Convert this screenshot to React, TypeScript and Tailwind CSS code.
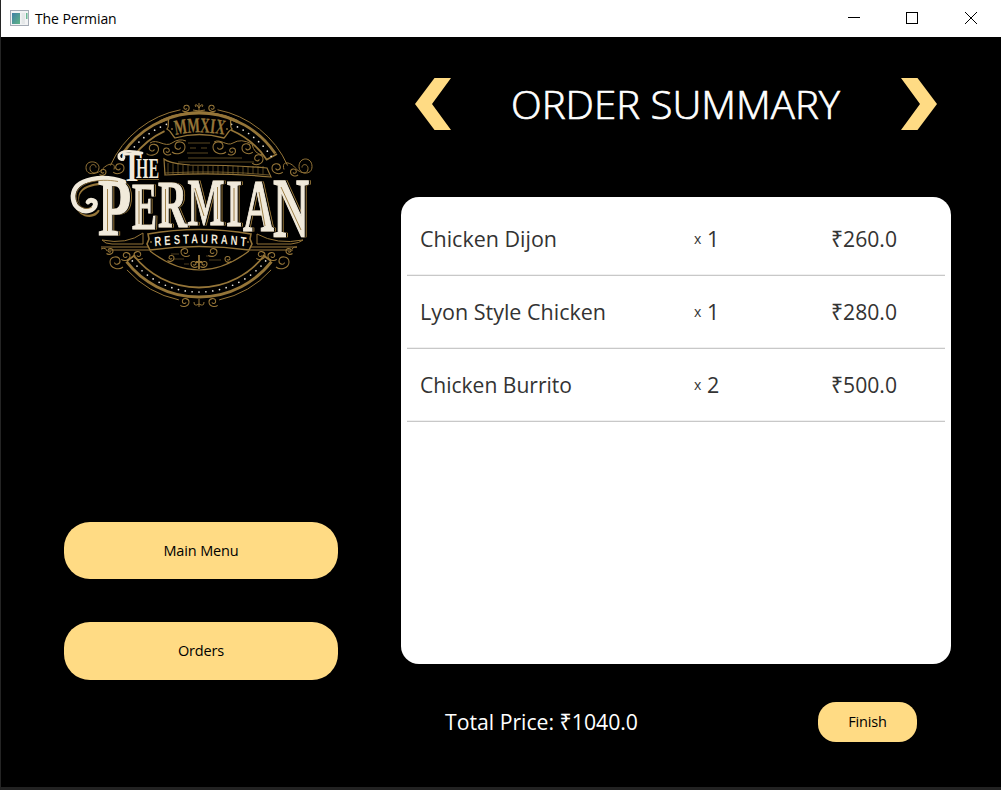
import React from "react";

const GOLD = "#957538";
const CREAM = "#f1eadb";

const items = [
  { name: "Chicken Dijon", width: 137, qty: 1, price: "₹260.0" },
  { name: "Lyon Style Chicken", width: 186, qty: 1, price: "₹280.0" },
  { name: "Chicken Burrito", width: 152, qty: 2, price: "₹500.0" },
];

/* A small open spiral: s is its radius, flip mirrors it. */
function Curl({ x, y, s, flip = false }: { x: number; y: number; s: number; flip?: boolean }) {
  const k = s / 6;
  return (
    <path
      d="M7 5 C3 8.500 -6 6.500 -6 0 C-6 -6 3 -7 4 -1.500 C4.500 2.500 -1 3.500 -1.500 0.500"
      transform={`translate(${x} ${y}) scale(${flip ? -k : k} ${k})`}
      strokeWidth={1.05 / k}
    />
  );
}

function ringPoints(r: number, from: number, to: number, n: number) {
  return Array.from({ length: n }, (_, i) => {
    const a = ((from + ((to - from) * i) / (n - 1)) * Math.PI) / 180;
    return { x: 199 + r * Math.cos(a), y: 205 + r * Math.sin(a) };
  });
}

function arc(r: number, from: number, to: number) {
  const p = ringPoints(r, from, to, 2);
  return `M${p[0].x} ${p[0].y} A${r} ${r} 0 0 1 ${p[1].x} ${p[1].y}`;
}

const letters = [
  { c: "P", x: 98, w: 33, top: 181, base: 235 },
  { c: "E", x: 132, w: 25, top: 185, base: 229 },
  { c: "R", x: 158, w: 29, top: 183, base: 227 },
  { c: "M", x: 187.5, w: 37, top: 181, base: 225 },
  { c: "I", x: 226, w: 16, top: 182, base: 226 },
  { c: "A", x: 243, w: 31, top: 182, base: 231 },
  { c: "N", x: 273, w: 36, top: 181, base: 237 },
];

function Word() {
  return (
    <g
      fill={CREAM}
      stroke={CREAM}
      strokeWidth="1"
      fontFamily="Liberation Serif, serif"
      fontWeight="bold"
      className="[filter:drop-shadow(1.5px_0px_0px_#000)_drop-shadow(1.5px_0.5px_0px_#957538)]"
    >
      {letters.map((l) => (
        <text
          key={l.c}
          fontSize="60"
          textLength={l.w}
          lengthAdjust="spacingAndGlyphs"
          transform={`translate(${l.x} ${l.base}) scale(1 ${(l.base - l.top) / 39.6})`}
        >
          {l.c}
        </text>
      ))}
    </g>
  );
}

function Logo() {
  const dots = [...ringPoints(87, 222, 248, 7), ...ringPoints(87, 292, 326, 9), ...ringPoints(87, 40, 140, 23)];
  return (
    <svg viewBox="60 95 270 220" className="h-[220px] w-[270px]" fill="none" stroke={GOLD} strokeWidth="1">
      <path d={arc(97, 204, 259)} />
      <path d={arc(97, 281, 336)} />
      <path d={arc(97, 42, 78)} />
      <path d={arc(97, 102, 138)} />
      <path d={arc(92, 214, 326)} strokeWidth="2.8" />
      <path d={arc(81.5, 217, 245)} strokeWidth="1.8" />
      <path d={arc(81.5, 293, 326)} strokeWidth="1.8" />
      <path d={arc(92, 38, 142)} strokeWidth="2.8" />
      <path d={arc(82.5, 38, 142)} strokeWidth="1.8" />
      <path d="M266 160 L277 154 M127 261 L135 255 M263 255 L271 261" strokeWidth="1.8" />
      <g fill="#e9e5dc" stroke="none">
        {dots.map((d, i) => (
          <circle key={i} cx={d.x} cy={d.y} r="0.85" />
        ))}
      </g>

      {/* year banner */}
      <path
        d="M169 118 C167 122 170 126 167 129 C171 131 172 135 175 138 Q199 131 224 138 C227 135 228 131 232 129 C229 126 232 122 230 118 Q199 106 169 118"
        strokeWidth="1.3"
        fill="#000"
      />
      <path d={arc(92, 245, 295)} strokeWidth="2.8" />
      <path id="year-line" d="M173 135.5 Q200 129 227 135.5" stroke="none" />
      <text fill={GOLD} stroke={GOLD} strokeWidth="0.3" fontFamily="Liberation Serif, serif" fontWeight="bold" fontSize="21" textLength="49" lengthAdjust="spacingAndGlyphs">
        <textPath href="#year-line" startOffset="2.5">MMXIX</textPath>
      </text>
      <g fill={GOLD} stroke="none">
        <circle cx="172" cy="129" r="0.9" />
        <circle cx="227" cy="129" r="0.9" />
      </g>

      {/* crown and foot ornaments */}
      <path d="M193 110 Q199 112 205 110 M199 103 V111 M196 107 Q194 104 197 105 L199 108 L201 105 Q204 104 202 107" />
      <Curl x={186} y={108} s={3.2} flip />
      <Curl x={212} y={108} s={3.2} />
      <path d="M199 299 V307 M194 302 Q194 307 199 304 Q204 307 204 302" />
      <Curl x={185} y={302} s={4} flip />
      <Curl x={213} y={302} s={4} />

      {/* side scrolls, each one a coil that runs into an S-shaped stem */}
      <path d="M96 168 C96 164 90 164 90 169 C90 175 99 175 99 168 C99 161 86 160 86 168 C86 177 98 175 103 169 C109 163 116 163 114 170" transform="translate(0 -.5)" />
      <Curl x={103} y={172} s={3} flip />
      <Curl x={119} y={168} s={5} flip />
      <path d="M302 168 C302 164 308 164 308 169 C308 176 299 174 299 167 C299 157 312 157 312 167 C312 177 299 174 295 168 C290 162 281 161 284 170" transform="translate(0 -.5)" />
      <Curl x={294} y={172} s={3.5} />
      <Curl x={277} y={168} s={5} />
      <Curl x={153} y={149} s={5.5} flip />
      <Curl x={167} y={151} s={3.5} />
      <Curl x={179} y={147} s={6} flip />
      <path d="M150 143 C157 138 165 148 172 143 Q179 138 186 141" />
      <Curl x={219} y={147} s={6} />
      <Curl x={232} y={151} s={3.5} flip />
      <Curl x={247} y={148} s={5} />
      <path d="M214 142 C220 138 227 147 233 143 Q241 138 252 144 Q254 154 263 155" />
      <Curl x={258} y={159} s={5} flip />
      <Curl x={116} y={262} s={6} />
      <Curl x={110} y={251} s={3} flip />
      <Curl x={126} y={256} s={4} flip />
      <Curl x={138} y={255} s={4} />
      <Curl x={261} y={255} s={4} flip />
      <Curl x={272} y={256} s={4} />
      <Curl x={283} y={262} s={6} flip />
      <Curl x={289} y={251} s={3} />

      {/* sky lines and bridge */}
      <path d="M188 143 H210 M190 148 H196 M201 148 H207 M187 153 H208 M188 158 H242 M178 162 H254" strokeWidth="0.6" />
      <path d="M164 159 C170 164 182 164 190 165 Q235 165 267 168 L271 177 Q220 172 165 175 Z" strokeWidth="1.2" />
      <path d="M165 173 Q220 170 269 175" strokeWidth="0.7" />
      <g strokeWidth="0.6">
        {Array.from({ length: 20 }, (_, i) => (
          <path key={i} d={`M${168 + i * 5} ${163 + Math.min(i * 0.5, 3)} V174`} />
        ))}
      </g>

      {/* rails and horns */}
      <path d="M101 247 H149 M109 250 H150 M250 247 H297 M249 250 H290" strokeWidth="1.2" />
      <path d="M102 240 Q127 245 143 233 V244 H112 Q105 244 102 240 M257 234 V244 H291 Q300 243 303 240 Q277 245 257 234" />
      <path d="M101 249 Q106 247 107 251 M297 247 Q291 247 292 251" />

      {/* lower lens */}
      <path d="M150 251 Q199 289 249 251" strokeWidth="1.2" />
      <path d="M171 254 H179 M174 259 H184 M206 256 H213 M209 260 H221 M184 264 H189" strokeWidth="0.5" />
      <Curl x={185} y={252} s={4} />
      <Curl x={171} y={258} s={3} flip />
      <Curl x={194} y={264} s={3} />
      <Curl x={204} y={264} s={3} flip />
      <Curl x={213} y={252} s={4} flip />
      <Curl x={228} y={259} s={3} />
      <path d="M199 255 V269 M196 262 H202" strokeWidth="1.8" />

      {/* name banner */}
      <path d="M148 234 Q199 225 251 234 L250 239 L252 244 L249 250 Q199 243 150 250 L147 244 L149 239 Z" fill="#000" strokeWidth="1.6" />
      <g fill={GOLD} stroke="none">
        <circle cx="151" cy="242" r="0.9" />
        <circle cx="248" cy="242" r="0.9" />
      </g>
      <g transform="scale(0.72 1)">
        <path id="rest-narrow" d="M214 246.5 Q276.400 240 343 246.5" stroke="none" />
        <text fill={CREAM} stroke="none" fontFamily="Liberation Sans, sans-serif" fontWeight="bold" fontSize="13" textLength="127" lengthAdjust="spacing">
          <textPath href="#rest-narrow" startOffset="1">RESTAURANT</textPath>
        </text>
      </g>

      {/* swash of the initial */}
      <path d="M126 185 C105 175 75 180 75 197 C75 213 92 216 96 207" stroke={GOLD} strokeWidth="5" transform="translate(1.500 2.500)" />
      <path d="M126 184 C105 174 75 179 75 197 C75 212 92 215 96 206" stroke="#000" strokeWidth="5.500" transform="translate(.5 1)" />
      <Word />
      <path d="M124 182 C105 175 74 177 73 196 C73 212 90 215 95 206 C97 200 90 199 88 202" stroke={CREAM} strokeWidth="4.8" strokeLinecap="round" />
      <path d="M118 181.500 C99 178 77 182 76 196 C76 207 86 211 92 207" strokeWidth="0.8" />

      {/* inlines in the capital stems */}
      <path d="M107.500 189 V231 M139 191 V224 M165.500 189 V222 M195 188 L204 216 M217.500 187 V219 M234 188 V221 M259 192 L265 226 M281 187 L301 230" strokeWidth="0.9" />

      <g fontFamily="Liberation Serif, serif" fontWeight="bold" fill={CREAM} stroke="#000" strokeWidth="1.6" paintOrder="stroke">
        <text fontSize="43" x="122" y="181" textLength="20" lengthAdjust="spacingAndGlyphs">T</text>
        <text fontSize="29" x="136" y="177.5" textLength="23" lengthAdjust="spacingAndGlyphs">HE</text>
      </g>
      <path d="M142 153 C134 151 121 150 119 155 C118 160 124 161 124 157" stroke={CREAM} strokeWidth="2.8" strokeLinecap="round" />
      <path d="M137 179.500 H159" strokeWidth="0.8" />
    </svg>
  );
}

/* One line of text fitted to a fixed advance width; weight thickens the strokes. */
function Line({ children, width, size, height, fill, weight = 0 }: { children: string; width: number; size: number; height: number; fill: string; weight?: number }) {
  return (
    <svg width={width} height={height} className="block overflow-visible">
      <text x="0" y={height * 0.76} fontSize={size} fill={fill} stroke={fill} strokeWidth={weight} textLength={width} lengthAdjust="spacingAndGlyphs">
        {children}
      </text>
    </svg>
  );
}

function MenuButton({ label, className }: { label: string; className: string }) {
  return (
    <button className={`flex items-center justify-center bg-[#ffdb84] text-[14.5px] tracking-[-0.15px] text-black ${className}`}>
      {label}
    </button>
  );
}

export default function App() {
  return (
    <div className="flex h-[790px] w-[1001px] flex-col overflow-hidden border-b-[3px] border-l border-b-[#222222] border-l-[#242424] bg-black font-['Open_Sans','Noto_Sans',sans-serif]">
      <header className="flex h-[37px] shrink-0 items-center bg-white pl-[9px]">
        <svg width="19" height="16" viewBox="0 0 19 16" className="mb-[2px] shrink-0">
          <defs>
            <linearGradient id="pane" x1="0" y1="0" x2="1" y2="1">
              <stop offset="0" stopColor="#3f7fa6" />
              <stop offset="1" stopColor="#5fb585" />
            </linearGradient>
          </defs>
          <rect x=".5" y=".5" width="18" height="15" fill="#f2f3f4" stroke="#a4abb5" />
          <rect x="2" y="3" width="8" height="11" fill="url(#pane)" />
          <rect x="11.500" y="3" width="3.500" height="11" fill="#e4e7e8" />
          <rect x="16" y="3" width="1.500" height="6" fill="#6bb894" />
        </svg>
        <span className="ml-[6px] text-[14px] leading-5 tracking-[-0.1px] text-black">The Permian</span>
        <svg width="130" height="14" viewBox="0 0 130 14" className="mt-[-1px] mr-[23px] ml-auto" fill="none" stroke="#000">
          <path d="M0 6.500 H12" />
          <rect x="58.500" y="1.500" width="11" height="11" />
          <path d="M117 1 L129 13 M129 1 L117 13" />
        </svg>
      </header>

      <div className="flex min-h-0 flex-1">
        <aside className="flex w-[400px] flex-col pl-[63px]">
          <div className="-ml-1 pt-[58px]">
            <Logo />
          </div>
          <MenuButton label="Main Menu" className="mt-[206.500px] h-[57.500px] w-[274px] rounded-[26px] pt-[1px]" />
          <MenuButton label="Orders" className="mt-[43px] h-[58px] w-[274px] rounded-[26px]" />
        </aside>

        <main className="flex w-[550px] flex-col">
          <div className="flex h-[160px] items-start justify-between pt-[41px] pr-[14px] pl-[14px]">
            <svg width="36" height="52" viewBox="0 0 36 52" fill="#ffdb84">
              <path d="M19.500 0 H36 L17 26 L36 52 H19.500 L0 26 Z" />
            </svg>
            <h1 className="-ml-[2px] pt-[1px] font-light">
              <Line width={329} size={39} height={52} fill="#ffffff" weight={0.7}>ORDER SUMMARY</Line>
            </h1>
            <svg width="36" height="52" viewBox="0 0 36 52" fill="#ffdb84">
              <path d="M16.500 0 H0 L19 26 L0 52 H16.500 L36 26 Z" />
            </svg>
          </div>

          <section className="h-[467.400px] shrink-0 rounded-[18px] bg-white px-[6px] pt-[6px]">
            {items.map((it) => (
              <div key={it.name} className="flex h-[73px] items-center border-b border-[#c8c8c8] pl-[13px] text-[#333333] shadow-[inset_0_-1px_0_#f0f0f0]">
                <div className="w-[274px]">
                  <Line width={it.width} size={22} height={30} fill="#333333">{it.name}</Line>
                </div>
                <div className="flex w-[137px] items-center">
                  <span className="w-[13px] pb-[1px] text-[14px]">x</span>
                  <span className="text-[21.500px] leading-[30px]">{it.qty}</span>
                </div>
                <Line width={66} size={22} height={30} fill="#333333">{it.price}</Line>
              </div>
            ))}
          </section>

          <footer className="flex items-center pt-[38px] pl-[44px]">
            <Line width={193} size={22} height={30} fill="#ffffff">Total Price: ₹1040.0</Line>
            <MenuButton label="Finish" className="ml-[180px] h-[39.500px] w-[99px] rounded-[18px] pb-[1px]" />
          </footer>
        </main>
      </div>
    </div>
  );
}
